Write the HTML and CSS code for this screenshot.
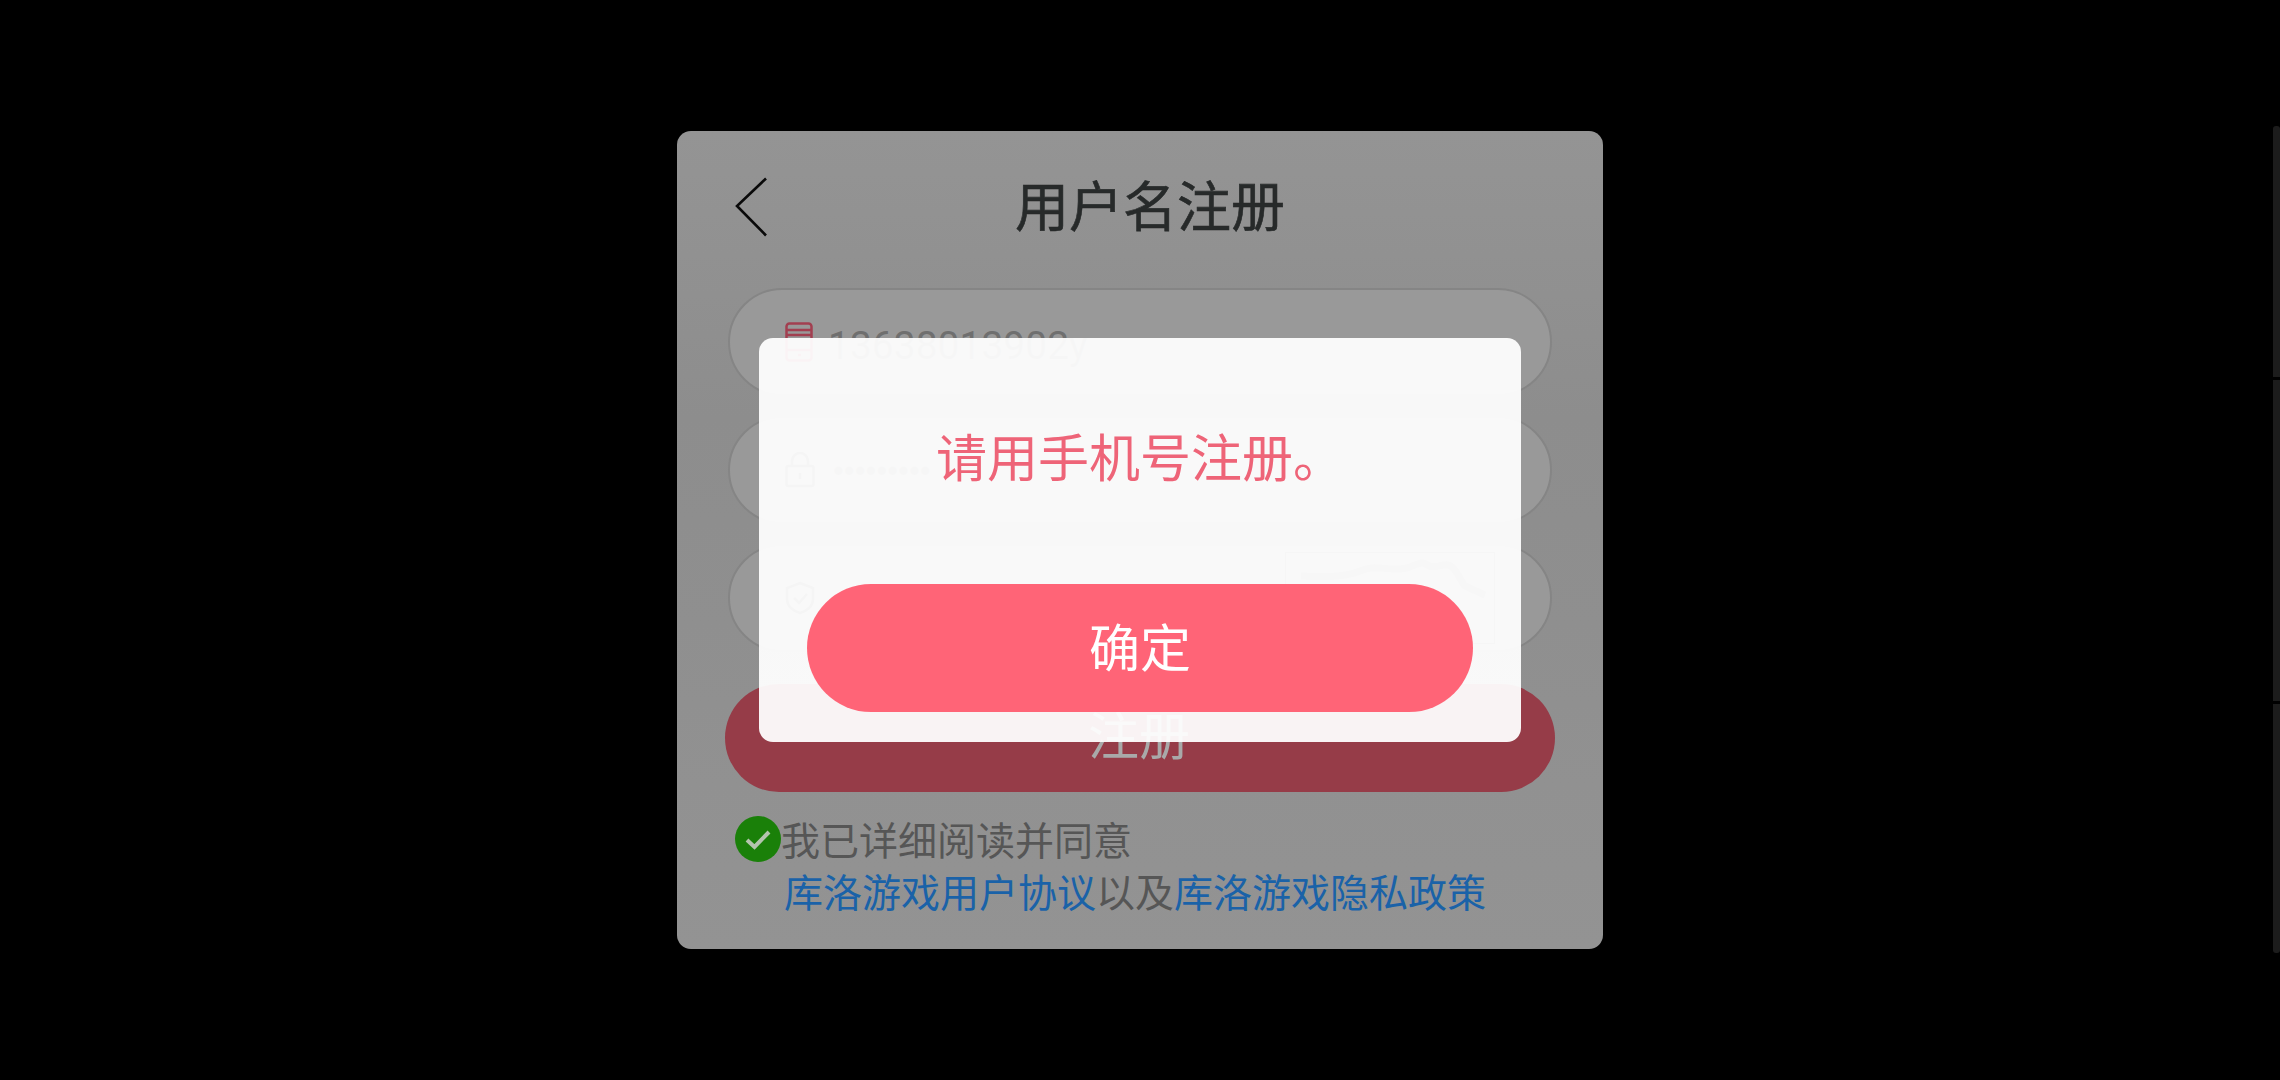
FILE: index.html
```html
<!DOCTYPE html>
<html lang="zh-CN">
<head>
<meta charset="utf-8">
<title>用户名注册</title>
<link rel="stylesheet" href="styles.css">
</head>
<body>
<main class="panel">
  <header class="head">
    <svg class="back" viewBox="0 0 34 62" width="34" height="62"><path d="M31 2.500 2 30 31 59.500" fill="none" stroke="#0a0a0a" stroke-width="2.600"/></svg>
    <h1 class="title">用户名注册</h1>
  </header>
  <div class="field">
    <svg class="ficon" viewBox="0 0 28 40" width="28" height="40"><g fill="none" stroke="#a23f50" stroke-width="2.500"><rect x="1.500" y="1.500" width="25" height="37" rx="3"/><path d="M1.500 8h25M1.500 13h25M1.500 28h25M13 33h3"/></g></svg>
    <span class="ftext">13638013902y</span>
  </div>
  <div class="field">
    <svg class="ficon" viewBox="0 0 30 36" width="30" height="36"><g fill="none" stroke="#555" stroke-width="2.500"><rect x="1.500" y="14" width="27" height="20" rx="2"/><path d="M7 14V9a8 8 0 0 1 16 0v5M15 21v6"/></g></svg>
    <span class="dots">•••••••••</span>
  </div>
  <div class="field field-code">
    <svg class="ficon" viewBox="0 0 30 34" width="30" height="34"><g fill="none" stroke="#555" stroke-width="2.500"><path d="M15 2 28 7v11c0 7-6 12-13 14C8 30 2 25 2 18V7Z"/><path d="m9 17 5 5 8-9"/></g></svg>
    <div class="captcha">
      <svg viewBox="0 0 210 90" width="210" height="90"><path d="M15 23c30 1 45 1 62-6 14-6 26 2 44-2 12-4 14-8 22-2 8 4 16-6 24 2 6 6 8 14 12 18l20 9" fill="none" stroke="#777" stroke-width="7"/></svg>
    </div>
  </div>
  <button class="submit" type="button">注册</button>
  <div class="agree">
    <div class="agree-line">
      <svg class="check" viewBox="0 0 46 46" width="46" height="46"><circle cx="23" cy="23" r="23" fill="#1a8009"/><path d="m12 24 7.500 7L34 16" fill="none" stroke="#b4c4ae" stroke-width="4"/></svg>
      <span>我已详细阅读并同意</span>
    </div>
    <div class="agree-links"><a class="link">库洛游戏用户协议</a>以及<a class="link">库洛游戏隐私政策</a></div>
  </div>
</main>

<div class="dialog">
  <p class="msg">请用手机号注册。</p>
  <button class="ok" type="button">确定</button>
</div>

<div class="scrollbar">
  <i class="seg seg-a"></i>
  <i class="seg seg-b"></i>
  <i class="seg seg-c"></i>
</div>
</body>
</html>
```

FILE: styles.css
```css
* { box-sizing: border-box; }
html, body { margin: 0; height: 100%; }
body {
  background: #000;
  font-family: "Noto Sans CJK SC", "Noto Sans", sans-serif;
  display: flex;
  align-items: center;
  justify-content: center;
  overflow: hidden;
}
.panel {
  width: 926px;
  height: 818px;
  border-radius: 14px;
  background: linear-gradient(180deg, #949494 0, #8d8d8d 35%, #8f8f8f 60%, #939393 100%);
  display: flex;
  flex-direction: column;
  align-items: center;
}
.head {
  width: 100%;
  height: 157px;
  flex: none;
  display: flex;
  align-items: center;
  justify-content: center;
  position: relative;
}
.back { position: absolute; left: 58px; top: 45px; }
.title {
  margin: 0 0 12px;
  font-size: 54px;
  line-height: 1;
  font-weight: 400;
  color: #272a2a;
  transform: translateX(10px);
  -webkit-text-stroke: .6px #272a2a;
}
.field {
  width: 824px;
  height: 108px;
  flex: none;
  margin-bottom: 20px;
  border: 2px solid #858585;
  border-radius: 54px;
  background: #999;
  display: flex;
  align-items: center;
  padding-left: 55px;
  position: relative;
}
.ficon { flex: none; }
.ftext {
  margin: 8px 0 0 15px;
  font-family: Roboto, sans-serif;
  font-size: 39px;
  color: #6f6f6f;
  line-height: 1;
}
.dots {
  margin-left: 18px;
  font-family: "Liberation Sans", sans-serif;
  font-size: 31px;
  letter-spacing: 0;
  color: #6f6f6f;
  line-height: 1;
}
.captcha {
  position: absolute;
  left: 555px;
  top: 6px;
  width: 210px;
  height: 92px;
  border: 1px solid #666;
}
.captcha svg { display: block; }
.submit {
  width: 830px;
  height: 108px;
  flex: none;
  margin-top: 12px;
  border: 0;
  border-radius: 54px;
  background: #963c48;
  color: #a9a9a9;
  font: 400 51px/1 "Noto Sans CJK SC", sans-serif;
  padding: 0 2px 10px 0;
}
.agree {
  align-self: stretch;
  padding: 20px 0 0 58px;
  font-size: 39px;
  line-height: 52px;
  color: #565656;
}
.agree-line { display: flex; align-items: center; }
.check { flex: none; margin-top: 2px; }
.agree-links { margin-left: 49px; }
.link { color: #1a62a8; }
.dialog {
  position: absolute;
  left: 759px;
  top: 338px;
  width: 762px;
  height: 404px;
  border-radius: 14px;
  background: rgba(255, 255, 255, .94);
  display: flex;
  flex-direction: column;
  align-items: center;
}
.msg {
  margin: 0;
  height: 246px;
  flex: none;
  padding-top: 92px;
  font-size: 51px;
  line-height: 1;
  color: #ee6478;
}
.ok {
  width: 666px;
  height: 128px;
  flex: none;
  border: 0;
  border-radius: 64px;
  background: #ff6477;
  color: #fff;
  font: 400 51px/1 "Noto Sans CJK SC", sans-serif;
  padding: 0 0 6px;
}
.scrollbar {
  position: absolute;
  right: 0;
  top: 126px;
  height: 827px;
  width: 7px;
  display: flex;
  flex-direction: column;
  gap: 3px;
}
.seg { display: block; background: #1c1c1c; }
.seg-a { height: 251px; border-radius: 3px 3px 0 0; }
.seg-b { height: 321px; }
.seg-c { flex: 1; border-radius: 0 0 3px 3px; }
```
